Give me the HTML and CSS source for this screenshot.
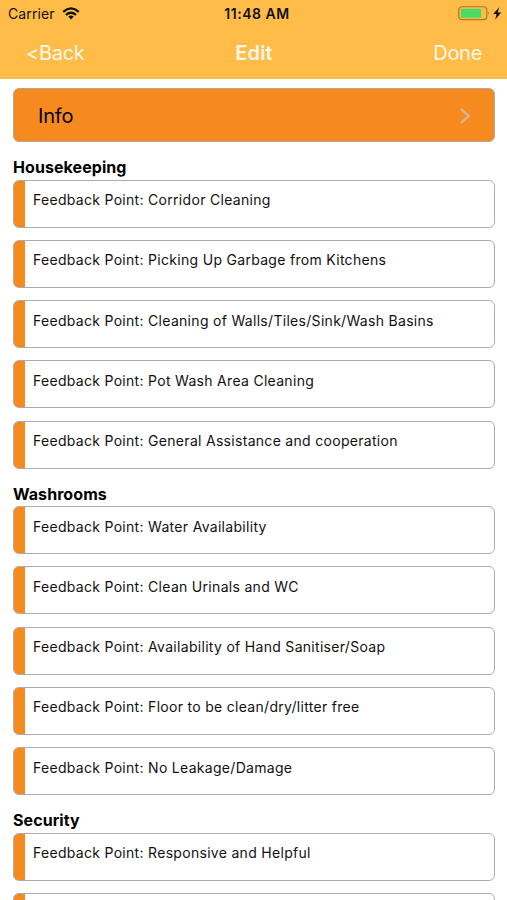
FILE: index.html
```html
<!DOCTYPE html>
<html lang="en">
<head>
<meta charset="utf-8">
<title>Edit</title>
<link rel="stylesheet" href="styles.css">
</head>
<body>
<header class="header">
  <div class="status">
    <div class="carrier"><span>Carrier</span>
      <svg class="wifi" viewBox="0 0 18 13" width="18" height="13"><g fill="none" stroke="#111" stroke-width="2.2"><path d="M1.2 4.8Q9-2 16.8 4.8"/><path d="M4 7.9Q9 3.6 14 7.9"/></g><path d="M6.2 9.6Q9 7.4 11.8 9.6L9 12.5Z" fill="#111"/></svg>
    </div>
    <div class="clock">11:48 AM</div>
    <div class="power">
      <svg viewBox="0 0 44 15" width="44" height="15"><rect x=".75" y=".75" width="28" height="12.8" rx="3" fill="none" stroke="#a87a2b" stroke-width="1.2"/><rect x="2.8" y="2.7" width="20.4" height="9" rx="1" fill="#4cd964"/><path d="M30.2 5Q32 7.1 30.2 9.4Z" fill="#a87a2b"/><path d="M41.2 1.2L35.2 8H38.6L37.2 13.6L43.2 6.4H39.8Z" fill="#111"/></svg>
    </div>
  </div>
  <nav class="nav"><span class="back">&lt;Back</span><span class="title">Edit</span><span class="done">Done</span></nav>
</header>
<main class="content">
  <div class="info"><span>Info</span>
    <svg viewBox="0 0 10 16" width="10" height="16"><path d="M1 1L8.6 8L1 15" fill="none" stroke="#d0b9a5" stroke-width="2.2"/></svg>
  </div>
  <section class="group">
    <h2>Housekeeping</h2>
    <div class="card"><span>Feedback Point: Corridor Cleaning</span></div>
    <div class="card"><span>Feedback Point: Picking Up Garbage from Kitchens</span></div>
    <div class="card"><span>Feedback Point: Cleaning of Walls/Tiles/Sink/Wash Basins</span></div>
    <div class="card"><span>Feedback Point: Pot Wash Area Cleaning</span></div>
    <div class="card"><span>Feedback Point: General Assistance and cooperation</span></div>
  </section>
  <section class="group">
    <h2>Washrooms</h2>
    <div class="card"><span>Feedback Point: Water Availability</span></div>
    <div class="card"><span>Feedback Point: Clean Urinals and WC</span></div>
    <div class="card"><span>Feedback Point: Availability of Hand Sanitiser/Soap</span></div>
    <div class="card"><span>Feedback Point: Floor to be clean/dry/litter free</span></div>
    <div class="card"><span>Feedback Point: No Leakage/Damage</span></div>
  </section>
  <section class="group">
    <h2>Security</h2>
    <div class="card"><span>Feedback Point: Responsive and Helpful</span></div>
    <div class="card"></div>
  </section>
</main>
</body>
</html>
```
FILE: styles.css
```css
* { box-sizing: border-box; }
body {
  margin: 0;
  height: 900px;
  overflow: hidden;
  background: #fff;
  color: #111;
  font-family: Inter, "Liberation Sans", sans-serif;
}
.header { height: 79px; background: #ffbc48; }
.status, .nav { display: grid; grid-template-columns: 1fr auto 1fr; }
.status { height: 27px; align-items: center; padding: 0 5px 0 8px; font-size: 14px; }
.carrier { display: flex; align-items: center; gap: 7px; letter-spacing: .1px; }
.clock { font-weight: 600; letter-spacing: .55px; padding-left: 4px; }
.power { display: flex; justify-content: flex-end; }
.nav { height: 51px; align-items: center; padding: 0 25px 0 26px; font-size: 20px; letter-spacing: -.3px; color: #fff8e8; }
.title { font-weight: 600; letter-spacing: .1px; }
.done { text-align: right; }
.content { height: 821px; overflow: hidden; padding: 9.4px 12.5px 0 13px; }
.info {
  height: 54px;
  display: flex;
  align-items: center;
  justify-content: space-between;
  padding: 2px 24px 0 24px;
  border: 1px solid #b5a797;
  border-radius: 6px;
  background: #f78a1f;
  font-size: 20px;
  color: #000;
  margin-bottom: 12px;
}
.info span { letter-spacing: -.2px; }
.group h2 { margin: 0; height: 25.3px; line-height: 27px; font-size: 16px; font-weight: 700; letter-spacing: .07px; color: #000; }
.card {
  height: 48px;
  margin-bottom: 12.25px;
  padding: 10.4px 0 0 19px;
  border: 1px solid #adadad;
  border-radius: 6px;
  background: linear-gradient(to right, #f78a1f 11.3px, #fff 11.3px);
  font-size: 14px;
  line-height: 18px;
  letter-spacing: .3px;
}
```
